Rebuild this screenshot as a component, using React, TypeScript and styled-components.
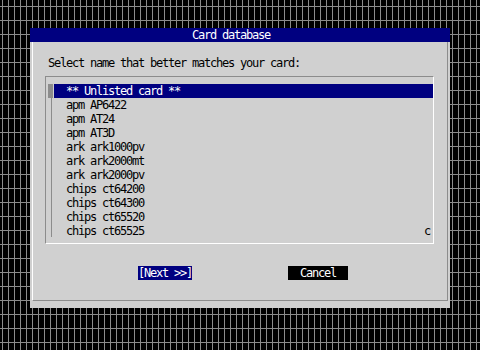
import React from "react";
import styled, { createGlobalStyle } from "styled-components";

const cards = [
  "** Unlisted card **",
  "apm AP6422",
  "apm AT24",
  "apm AT3D",
  "ark ark1000pv",
  "ark ark2000mt",
  "ark ark2000pv",
  "chips ct64200",
  "chips ct64300",
  "chips ct65520",
  "chips ct65525",
];

const GlobalStyle = createGlobalStyle`
  html, body {
    margin: 0;
    padding: 0;
    background: #000;
  }
  body {
    font-family: "DejaVu Sans Mono", "Liberation Mono", monospace;
    font-size: 12px;
    letter-spacing: -1.224px;
    line-height: 14px;
  }
`;

const Screen = styled.div`
  width: 480px;
  height: 350px;
  box-sizing: border-box;
  padding: 28px 0 0 30px;
  background-color: #000;
  background-image: linear-gradient(to right, #8c8c8c 1px, transparent 1px),
    linear-gradient(to bottom, #8c8c8c 1px, transparent 1px);
  background-size: 6px 14px;
  background-position: 2px 0, 0 6px;
`;

const Dialog = styled.div`
  width: 420px;
`;

const TitleBar = styled.div`
  height: 14px;
  background: #000080;
  color: #fff;
  padding-left: 162px;
  white-space: pre;
`;

const Body = styled.div`
  height: 266px;
  box-sizing: border-box;
  background: #d0d0d0;
  padding: 0 2px;
`;

const Panel = styled.div`
  height: 259px;
  box-sizing: border-box;
  border-left: 1px solid #fff;
  border-right: 1px solid #8c8c8c;
  border-bottom: 1px solid #8c8c8c;
  padding: 14px 0 0 12px;
  display: flex;
  flex-direction: column;
  color: #000;
`;

const Label = styled.div`
  padding-left: 3px;
  height: 14px;
  white-space: pre;
`;

const ListFrame = styled.div`
  margin-top: 6px;
  width: 389px;
  height: 168px;
  box-sizing: border-box;
  border-top: 1px solid #8c8c8c;
  border-left: 1px solid #8c8c8c;
  border-right: 1px solid #fff;
  border-bottom: 1px solid #fff;
  padding: 7px 0 5px 2px;
  display: flex;
  gap: 1px;
`;

const ScrollBar = styled.div`
  width: 5px;
  display: flex;
  flex-direction: column;
`;

const Thumb = styled.div`
  height: 14px;
  background: #8c8c8c;
`;

const Track = styled.div`
  flex: 1;
  width: 3px;
  border-right: 1px solid #8c8c8c;
  margin-bottom: 1px;
`;

const Rows = styled.div`
  width: 379px;
  display: flex;
  flex-direction: column;
`;

const Row = styled.div<{ $selected?: boolean }>`
  height: 14px;
  padding-left: 12px;
  display: flex;
  justify-content: space-between;
  white-space: pre;
  background: ${(p) => (p.$selected ? "#000080" : "transparent")};
  color: ${(p) => (p.$selected ? "#fff" : "#000")};
`;

const More = styled.span`
  width: 6px;
  margin-right: 3px;
`;

const Buttons = styled.div`
  margin-top: 22px;
  padding-left: 93px;
  display: flex;
  gap: 96px;
`;

const Button = styled.div<{ $bg: string; $width: number }>`
  width: ${(p) => p.$width}px;
  height: 14px;
  background: ${(p) => p.$bg};
  color: #fff;
  text-align: center;
  white-space: pre;
`;

export default function App() {
  return (
    <>
      <GlobalStyle />
      <Screen>
        <Dialog>
          <TitleBar>Card database</TitleBar>
          <Body>
            <Panel>
              <Label>Select name that better matches your card:</Label>
              <ListFrame>
                <ScrollBar>
                  <Thumb />
                  <Track />
                </ScrollBar>
                <Rows>
                  {cards.map((name, i) => (
                    <Row key={name} $selected={i === 0}>
                      <span>{name}</span>
                      {i === cards.length - 1 && <More>c</More>}
                    </Row>
                  ))}
                </Rows>
              </ListFrame>
              <Buttons>
                <Button $bg="#000080" $width={54}>[Next &gt;&gt;]</Button>
                <Button $bg="#000" $width={60}>Cancel</Button>
              </Buttons>
            </Panel>
          </Body>
        </Dialog>
      </Screen>
    </>
  );
}
